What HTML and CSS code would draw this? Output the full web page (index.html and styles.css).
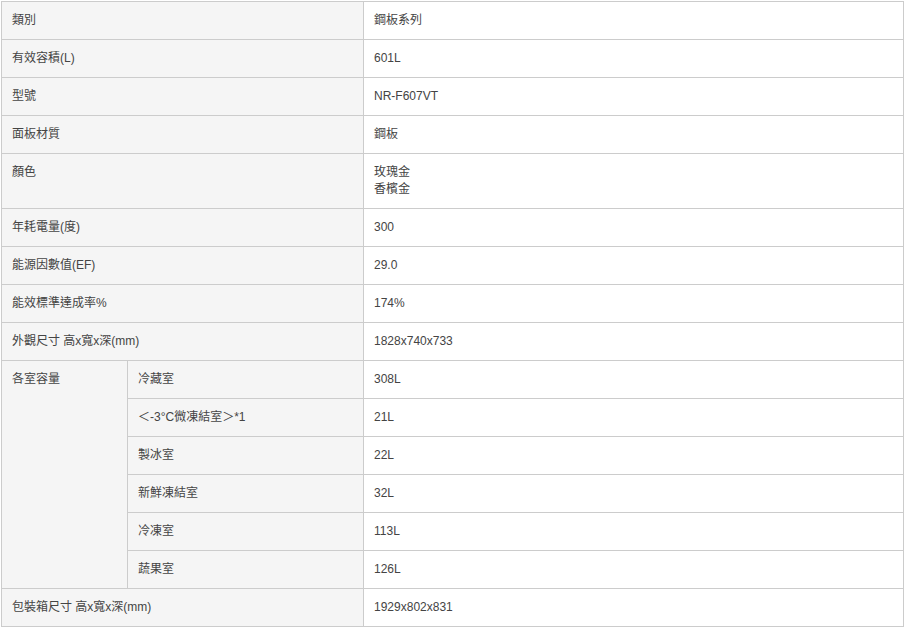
FILE: index.html
```html
<!DOCTYPE html>
<html lang="zh-Hant">
<head>
<meta charset="utf-8">
<title>規格</title>
<link rel="stylesheet" href="styles.css">
</head>
<body>
<table class="spec">
  <colgroup>
    <col class="c-a">
    <col class="c-b">
    <col class="c-v">
  </colgroup>
  <tbody>
    <tr><th colspan="2">類別</th><td>鋼板系列</td></tr>
    <tr><th colspan="2">有效容積(L)</th><td>601L</td></tr>
    <tr><th colspan="2">型號</th><td>NR-F607VT</td></tr>
    <tr><th colspan="2">面板材質</th><td>鋼板</td></tr>
    <tr><th colspan="2">顏色</th><td>玫瑰金<br>香檳金</td></tr>
    <tr><th colspan="2">年耗電量(度)</th><td>300</td></tr>
    <tr><th colspan="2">能源因數值(EF)</th><td>29.0</td></tr>
    <tr><th colspan="2">能效標準達成率%</th><td>174%</td></tr>
    <tr><th colspan="2">外觀尺寸 高x寬x深(mm)</th><td>1828x740x733</td></tr>
    <tr><th rowspan="6">各室容量</th><th>冷藏室</th><td>308L</td></tr>
    <tr><th>＜-3°C微凍結室＞*1</th><td>21L</td></tr>
    <tr><th>製冰室</th><td>22L</td></tr>
    <tr><th>新鮮凍結室</th><td>32L</td></tr>
    <tr><th>冷凍室</th><td>113L</td></tr>
    <tr><th>蔬果室</th><td>126L</td></tr>
    <tr><th colspan="2">包裝箱尺寸 高x寬x深(mm)</th><td>1929x802x831</td></tr>
  </tbody>
</table>
</body>
</html>
```

FILE: styles.css
```css
html, body {
  margin: 0;
  padding: 0;
  background: #ffffff;
}

body {
  padding: 1px 0 0 1px;
  font-family: "Liberation Sans", "Noto Sans CJK TC", sans-serif;
  font-size: 12px;
  color: #444444;
}

.spec {
  border-collapse: collapse;
  table-layout: fixed;
  width: 902px;
}

.c-a { width: 126px; }
.c-b { width: 236px; }
.c-v { width: 540px; }

.spec th,
.spec td {
  border: 1px solid #cccccc;
  padding: 10px 10px;
  line-height: 17px;
  height: 17px;
  text-align: left;
  vertical-align: top;
  font-weight: normal;
  white-space: nowrap;
}

.spec th {
  background: #f5f5f5;
}

.spec td {
  background: #ffffff;
}
```
